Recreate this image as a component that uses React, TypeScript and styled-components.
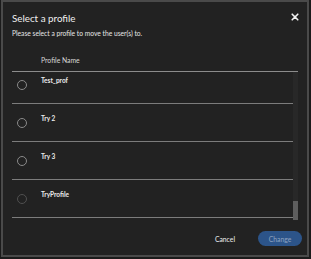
import { FC, useLayoutEffect, useRef } from "react";
import styled, { createGlobalStyle } from "styled-components";

const GlobalStyle = createGlobalStyle`
  html, body {
    margin: 0;
    padding: 0;
    background: #1b1b1b;
  }
  body {
    font-family: "Lato", "Liberation Sans", sans-serif;
  }
`;

const profiles = ["Test_prof", "Try 2", "Try 3", "TryProfile"];

const App: FC = () => {
    const listRef = useRef<HTMLDivElement>(null);

    // the list is shown scrolled down to its end
    useLayoutEffect(() => {
        if (listRef.current) {
            listRef.current.scrollTop = listRef.current.scrollHeight;
        }
    }, []);

    return (
        <>
            <GlobalStyle/>
            <SDialog>
                <SHeader>
                    <STitle>Select a profile</STitle>
                    <SClose aria-label="Close">
                        <svg width="8" height="8" viewBox="0 0 8 8">
                            <path d="M1.2 1.2 L6.8 6.8 M6.8 1.2 L1.2 6.8" stroke="#f2f2f2" strokeWidth="1.6" strokeLinecap="round"/>
                        </svg>
                    </SClose>
                </SHeader>
                <SSubtitle>Please select a profile to move the user(s) to.</SSubtitle>
                <STableHead>Profile Name</STableHead>
                <SBody>
                    <SList ref={ listRef }>
                        { profiles.map((name, i) => (
                            <SRow key={ name }>
                                <SRadio $dim={ i === profiles.length - 1 }/>
                                <SName>{ name }</SName>
                            </SRow>
                        )) }
                    </SList>
                    <STrack>
                        <SThumb/>
                    </STrack>
                </SBody>
                <SFooter>
                    <SCancel>Cancel</SCancel>
                    <SChange disabled>Change</SChange>
                </SFooter>
            </SDialog>
        </>
    )
}

export default App;

const SDialog = styled.div`
  box-sizing: border-box;
  display: flex;
  flex-direction: column;
  width: 308px;
  height: 257px;
  margin-left: 1px;
  padding: 8px 9px 9px 9px;
  background: #222222;
  border: 2px solid #4a4a4a;
`;

const SHeader = styled.div`
  display: flex;
  justify-content: space-between;
  align-items: center;
  height: 16px;
`;

const STitle = styled.h2`
  margin: 0;
  font-weight: 400;
  font-size: 9.8px;
  line-height: 16px;
  color: #f0f0f0;
`;

const SClose = styled.button`
  display: flex;
  align-items: center;
  justify-content: center;
  padding: 0;
  margin-right: -2px;
  margin-top: -2px;
  width: 10px;
  height: 10px;
  background: none;
  border: none;
`;

const SSubtitle = styled.p`
  margin: 3px 0 0;
  font-size: 6.7px;
  line-height: 9px;
  color: #e6e6e6;
`;

const STableHead = styled.div`
  box-sizing: border-box;
  height: 34px;
  padding: 18px 0 0 29px;
  font-size: 6.8px;
  line-height: 9px;
  color: #d8d8d8;
  border-bottom: 1px solid #8c8c8c;
`;

const SBody = styled.div`
  display: flex;
  height: 148px;
`;

const SList = styled.div`
  flex: 1;
  overflow: hidden;
`;

const SRow = styled.div`
  box-sizing: border-box;
  position: relative;
  height: 38px;
  padding: 10px 0 0 29px;
  border-bottom: 1px solid #7c7c7c;

  &:last-child {
    margin-bottom: 2px;
  }
`;

const SRadio = styled.span<{ $dim?: boolean }>`
  position: absolute;
  left: 5px;
  top: 14px;
  box-sizing: border-box;
  width: 10px;
  height: 10px;
  border-radius: 50%;
  border: 1px solid ${ p => p.$dim ? "#505050" : "#8a8a8a" };
`;

const SName = styled.div`
  font-size: 6.5px;
  line-height: 9px;
  font-weight: 700;
  color: #ececec;
`;

const STrack = styled.div`
  display: flex;
  flex-direction: column;
  justify-content: flex-end;
  width: 5px;
  background: #282828;
`;

const SThumb = styled.div`
  height: 19px;
  background: #5e5e5e;
`;

const SFooter = styled.div`
  display: flex;
  justify-content: flex-end;
  align-items: center;
  gap: 23px;
  margin-top: 11px;
  margin-right: -4px;
`;

const SCancel = styled.button`
  padding: 0;
  background: none;
  border: none;
  font-family: inherit;
  font-size: 6.8px;
  color: #eeeeee;
`;

const SChange = styled.button`
  width: 44px;
  height: 15px;
  padding: 0;
  border: none;
  border-radius: 8px;
  background: #2c5489;
  font-family: inherit;
  font-size: 6.8px;
  color: #8ea3c0;
`;
